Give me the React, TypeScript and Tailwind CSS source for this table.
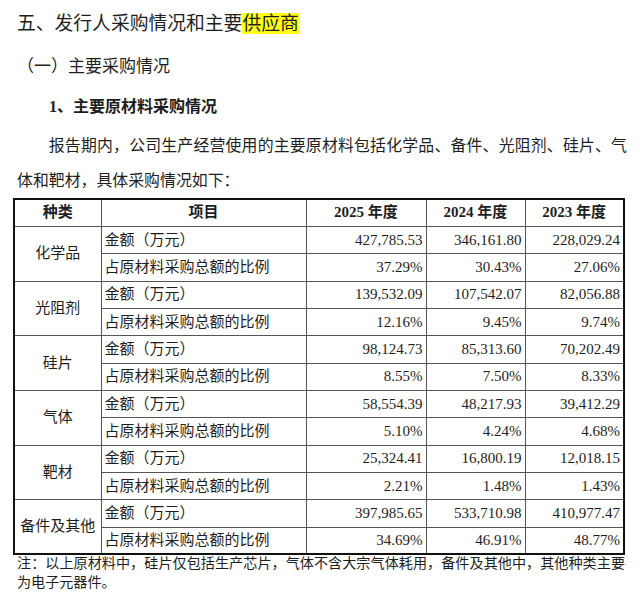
const font = { fontFamily: '"Liberation Serif", "Noto Sans CJK SC", serif' };

type Group = {
  name: string;
  amount: [string, string, string];
  ratio: [string, string, string];
};

const groups: Group[] = [
  { name: "化学品", amount: ["427,785.53", "346,161.80", "228,029.24"], ratio: ["37.29%", "30.43%", "27.06%"] },
  { name: "光阻剂", amount: ["139,532.09", "107,542.07", "82,056.88"], ratio: ["12.16%", "9.45%", "9.74%"] },
  { name: "硅片", amount: ["98,124.73", "85,313.60", "70,202.49"], ratio: ["8.55%", "7.50%", "8.33%"] },
  { name: "气体", amount: ["58,554.39", "48,217.93", "39,412.29"], ratio: ["5.10%", "4.24%", "4.68%"] },
  { name: "靶材", amount: ["25,324.41", "16,800.19", "12,018.15"], ratio: ["2.21%", "1.48%", "1.43%"] },
  { name: "备件及其他", amount: ["397,985.65", "533,710.98", "410,977.47"], ratio: ["34.69%", "46.91%", "48.77%"] },
];

const cell = "border border-[#555] text-[15px] leading-none";
const num = `${cell} text-right pr-[3px]`;

function GroupRows({ g }: { g: Group }) {
  return (
    <>
      <tr className="h-[27.33px]">
        <td rowSpan={2} className={`${cell} text-center align-middle`}>
          {g.name}
        </td>
        <td className={`${cell} pl-[3px]`}>金额（万元）</td>
        {g.amount.map((v, i) => (
          <td key={i} className={num}>
            {v}
          </td>
        ))}
      </tr>
      <tr className="h-[27.33px]">
        <td className={`${cell} pl-[3px]`}>占原材料采购总额的比例</td>
        {g.ratio.map((v, i) => (
          <td key={i} className={num}>
            {v}
          </td>
        ))}
      </tr>
    </>
  );
}

export default function App() {
  return (
    <div className="w-[640px] h-[595px] overflow-hidden bg-white text-[#1e1e1e] pt-[10px]" style={font}>
      <h1 className="pl-[17px] text-[18.8px] leading-[28px] font-normal">
        五、发行人采购情况和主要
        <span className="inline-block bg-[#ffff1a] leading-[21px]">供应商</span>
      </h1>
      <h2 className="mt-[15px] pl-[17px] text-[17px] leading-[28px] font-normal">（一）主要采购情况</h2>
      <h3 className="mt-[12px] pl-[49px] text-[16px] leading-[28px] font-bold">1、主要原材料采购情况</h3>
      <p className="mt-[6.5px] pl-[17px] pr-[13px] text-[15.9px] leading-[35px] indent-[2em] text-justify">
        报告期内，公司生产经营使用的主要原材料包括化学品、备件、光阻剂、硅片、气体和靶材，具体采购情况如下：
      </p>
      <table className="ml-[13px] w-[610px] table-fixed border-collapse border-2 border-[#111]">
        <colgroup>
          <col className="w-[87px]" />
          <col className="w-[205px]" />
          <col className="w-[120px]" />
          <col className="w-[99px]" />
          <col className="w-[99px]" />
        </colgroup>
        <thead>
          <tr className="h-[28px] font-bold">
            <th className={`${cell} text-center`}>种类</th>
            <th className={`${cell} text-center`}>项目</th>
            <th className={`${cell} text-center`}>2025 年度</th>
            <th className={`${cell} text-center`}>2024 年度</th>
            <th className={`${cell} text-center`}>2023 年度</th>
          </tr>
        </thead>
        <tbody>
          {groups.map((g) => (
            <GroupRows key={g.name} g={g} />
          ))}
        </tbody>
      </table>
      <p className="pl-[17px] pr-[15px] text-[14.1px] leading-[19px] text-justify mt-[-1px]">
        注：以上原材料中，硅片仅包括生产芯片，气体不含大宗气体耗用，备件及其他中，其他种类主要为电子元器件。
      </p>
    </div>
  );
}
